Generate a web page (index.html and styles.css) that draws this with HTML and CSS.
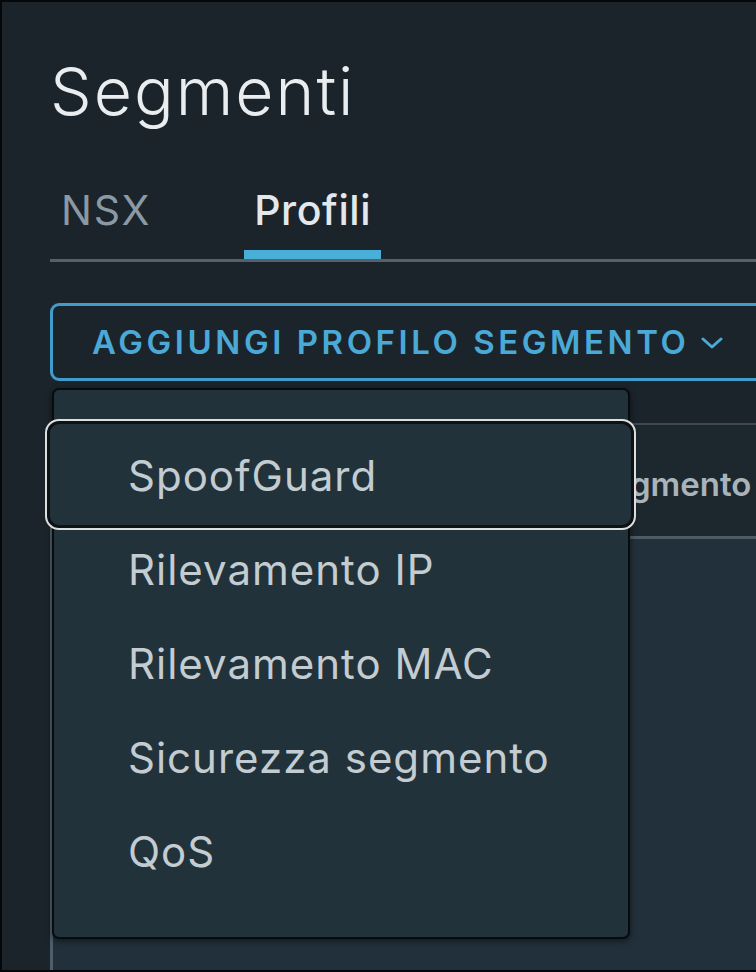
FILE: index.html
```html
<!DOCTYPE html>
<html lang="it">
<head>
<meta charset="utf-8">
<title>Segmenti</title>
<link rel="stylesheet" href="styles.css">
</head>
<body>
<div class="frame">
  <div class="content">
    <h1 class="title">Segmenti</h1>
    <nav class="tabs">
      <div class="tab">NSX</div>
      <div class="tab active">Profili</div>
    </nav>
    <div class="btn-row">
      <button class="btn">AGGIUNGI PROFILO SEGMENTO
        <svg class="chev" viewBox="0 0 22 12" width="22" height="12"><polyline points="2,2 11,10 20,2" fill="none" stroke="#4aa9d6" stroke-width="3" stroke-linecap="round" stroke-linejoin="round"/></svg>
      </button>
    </div>
    <div class="grid">
      <div class="grid-head"><span class="col">Segmento</span></div>
      <div class="grid-body"></div>
    </div>
  </div>
  <div class="menu">
    <div class="item focused">SpoofGuard</div>
    <div class="item">Rilevamento IP</div>
    <div class="item">Rilevamento MAC</div>
    <div class="item">Sicurezza segmento</div>
    <div class="item">QoS</div>
  </div>
</div>
</body>
</html>
```
FILE: styles.css
```css
* { box-sizing: border-box; }
html, body { margin: 0; padding: 0; background: #000; }
body { font-family: Inter, "Noto Sans", sans-serif; }
.frame {
  position: relative;
  width: 756px;
  height: 972px;
  border-left: 2px solid #05080a;
  border-top: 2px solid #05080a;
  border-bottom: 2px solid #05080a;
  background: #1b242b;
  overflow: hidden;
}
.content {
  padding-left: 48px;
  padding-top: 49px;
}
.title {
  margin: 0;
  font-size: 66px;
  line-height: 80px;
  font-weight: 300;
  color: #e9edef;
  letter-spacing: 2px;
}
.tabs {
  margin-top: 49px;
  display: flex;
  gap: 82px;
  border-bottom: 3px solid #53616b;
}
.tab {
  font-size: 41px;
  line-height: 60px;
  padding: 0 11px 19px;
  color: #8a99a3;
  font-weight: 400;
  letter-spacing: 1.8px;
}
.tab.active {
  color: #e3e8eb;
  font-weight: 500;
  letter-spacing: 0.6px;
  padding: 0 10px 19px;
  box-shadow: inset 0 -9px 0 #49afd9;
}
.btn-row {
  margin-top: 41px;
  display: flex;
}
.btn {
  flex: none;
  display: inline-flex;
  align-items: center;
  height: 78px;
  padding: 0 60px 0 39px;
  border: 3px solid #3f9ccb;
  border-radius: 9px;
  background: transparent;
  color: #4aa9d6;
  font-family: Inter, "Noto Sans", sans-serif;
  font-size: 33px;
  font-weight: 600;
  letter-spacing: 3.55px;
  white-space: nowrap;
}
.chev { margin-left: 12px; margin-top: 2px; }
.grid {
  margin-top: 42px;
  border-top: 2px solid #3d4a53;
  border-left: 3px solid #4f5f69;
}
.grid-head {
  height: 114px;
  display: flex;
  align-items: center;
  padding-left: 536px;
  border-bottom: 3px solid #4d5b64;
  background: #1c272e;
}
.col {
  font-size: 33px;
  font-weight: 600;
  color: #a9b4ba;
  white-space: nowrap;
  padding-top: 6px;
}
.grid-body {
  height: 500px;
  background: #21303a;
}
.menu {
  position: absolute;
  left: 50px;
  top: 386px;
  width: 578px;
  height: 551px;
  background: #22323a;
  border: 2px solid #070b0d;
  border-radius: 7px;
  box-shadow: 0 2px 6px rgba(0,0,0,0.5);
  padding-top: 39px;
}
.item {
  position: relative;
  z-index: 0;
  height: 94px;
  line-height: 94px;
  padding-left: 74px;
  font-size: 42px;
  color: #c3ccd1;
  letter-spacing: 1px;
  white-space: nowrap;
}
.item.focused::before {
  content: "";
  position: absolute;
  z-index: -1;
  left: -9px;
  right: -8px;
  top: -10px;
  bottom: -7px;
  border: 2px solid #dcdfdf;
  border-radius: 14px;
  box-shadow: inset 0 0 0 3px #0e1214;
  background: #22323a;
}
```
